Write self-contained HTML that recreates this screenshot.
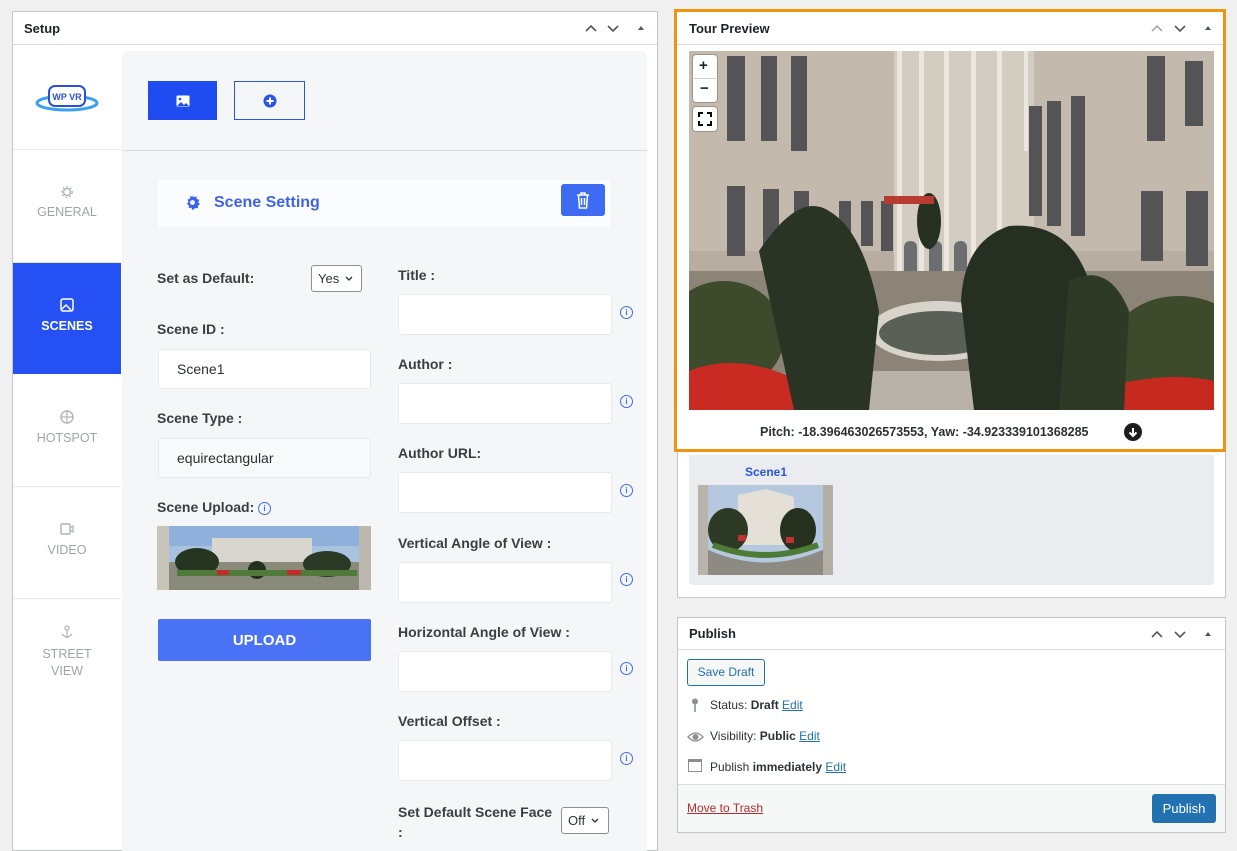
<!DOCTYPE html>
<html><head><meta charset="utf-8">
<style>
*{box-sizing:border-box;margin:0;padding:0}
body{width:1237px;height:844px;overflow:hidden;background:#f0f0f1;font-family:"Liberation Sans",sans-serif;color:#1d2327;position:relative}
.a{position:absolute}
.hdr{font-size:13px;font-weight:bold}
.side{position:absolute;left:13px;width:108px;text-align:center;font-size:12.5px;color:#a0a4a8;border-bottom:1px solid #e6e7e9;background:#fff}
.lbl{position:absolute;font-size:14px;font-weight:bold;color:#3a3d42}
.inp{position:absolute;background:#fff;border:1px solid #e8e9ec;border-radius:3px;font-size:14px;color:#2c2f33;padding-left:18px;display:flex;align-items:center}
.q{position:absolute;width:13px;height:13px;border:1.3px solid #3f6cf0;border-radius:50%;font-size:8px;color:#3f6cf0;text-align:center;line-height:11px;font-weight:bold}
.sel{position:absolute;background:#fff;border:1px solid #8c8f94;border-radius:3px;font-size:13px;color:#2c3338;padding-left:6px;display:flex;align-items:center}
.pl{position:absolute;left:710px;font-size:12px;color:#2c3338}
.pl a{color:#2271b1;text-decoration:underline}
</style></head><body>

<!-- Setup panel -->
<div class="a" style="left:12px;top:11px;width:646px;height:840px;background:#fff;border:1px solid #c3c4c7"></div>
<div class="a" style="left:13px;top:44px;width:644px;height:1px;background:#dcdcde"></div>
<div class="a hdr" style="left:24px;top:21px">Setup</div>
<svg class="a" style="left:584px;top:22px" width="60" height="12"><path d="M2 9l5-5 5 5M24 4l5 5 5-5" fill="none" stroke="#50575e" stroke-width="1.6"/><path d="M54 8l3-4 3 4z" fill="#50575e"/></svg>

<!-- sidebar -->
<div class="side" style="top:45px;height:105px">
 <svg width="66" height="36" viewBox="0 0 66 36" style="margin-top:36px">
  <ellipse cx="33" cy="22" rx="30" ry="7" fill="none" stroke="#3aa0f0" stroke-width="3"/>
  <rect x="15" y="5" width="36" height="20" rx="6" fill="#fff" stroke="#2b4fd8" stroke-width="2"/>
  <text x="33" y="19" font-size="9" font-weight="bold" text-anchor="middle" fill="#2b4fd8" font-family="Liberation Sans">WP VR</text>
 </svg>
</div>
<div class="side" style="top:150px;height:113px;padding-top:36px"><svg width="12" height="12" viewBox="0 0 12 12"><circle cx="6" cy="6" r="3.5" fill="none" stroke="#b0b3b7" stroke-width="1.5"/><circle cx="6" cy="6" r="5.3" fill="none" stroke="#b0b3b7" stroke-width="1.2" stroke-dasharray="2 2"/></svg><div style="margin-top:4px">GENERAL</div></div>
<div class="side" style="top:263px;height:111px;background:#2551f4;color:#fff;font-weight:bold;padding-top:35px;border:none">
 <svg width="14" height="14" viewBox="0 0 14 14"><rect x="1" y="1" width="12" height="12" rx="2" fill="none" stroke="#fff" stroke-width="1.5"/><path d="M2 11l4-4 5 5" fill="none" stroke="#fff" stroke-width="1.5"/></svg>
 <div style="margin-top:4px">SCENES</div></div>
<div class="side" style="top:374px;height:113px;padding-top:36px"><svg width="14" height="14"><circle cx="7" cy="7" r="6" fill="none" stroke="#b0b3b7" stroke-width="1.4"/><path d="M7 1v12M1 7h12" stroke="#b0b3b7" stroke-width="1.2"/></svg><div style="margin-top:4px">HOTSPOT</div></div>
<div class="side" style="top:487px;height:112px;padding-top:36px"><svg width="14" height="12"><rect x="1" y="1" width="9" height="10" rx="1" fill="none" stroke="#b0b3b7" stroke-width="1.4"/><path d="M10 5l3-2v6l-3-2" fill="none" stroke="#b0b3b7" stroke-width="1.2"/></svg><div style="margin-top:5px">VIDEO</div></div>
<div class="side" style="top:599px;height:114px;padding-top:26px;border:none"><svg width="12" height="14"><circle cx="6" cy="3" r="2" fill="none" stroke="#b0b3b7" stroke-width="1.3"/><path d="M6 5v8M1 9q5 6 10 0" fill="none" stroke="#b0b3b7" stroke-width="1.3"/></svg><div style="margin-top:4px;line-height:17px">STREET<br>VIEW</div></div>

<!-- content area -->
<div class="a" style="left:122px;top:51px;width:525px;height:800px;background:#f5f6f8;border-radius:6px 6px 0 0"></div>
<div class="a" style="left:122px;top:150px;width:525px;height:1px;background:#d6dbe6"></div>
<div class="a" style="left:148px;top:81px;width:69px;height:39px;background:#1f4cf0;display:flex;align-items:center;justify-content:center">
 <svg width="14" height="12" viewBox="0 0 14 12"><rect x="0.5" y="0.5" width="13" height="11" rx="1" fill="#fff"/><path d="M1 11l4-4 3 3 2-2 3 3z" fill="#1f4cf0"/><circle cx="4" cy="4" r="1.3" fill="#1f4cf0"/></svg></div>
<div class="a" style="left:234px;top:81px;width:71px;height:39px;border:1px solid #2b55e8;display:flex;align-items:center;justify-content:center">
 <svg width="14" height="14"><circle cx="7" cy="7" r="6.5" fill="#2b55e8"/><path d="M7 3.5v7M3.5 7h7" stroke="#fff" stroke-width="2"/></svg></div>

<div class="a" style="left:158px;top:180px;width:452px;height:47px;background:#fbfcfe"></div>
<svg class="a" style="left:185px;top:195px" width="15" height="15" viewBox="0 0 16 16"><path d="M8 0l1.5 2.3 2.7-.8.4 2.8 2.7.9-1.2 2.5 1.9 2-2.3 1.6.3 2.8-2.8-.2L8 16l-1.3-2.4-2.8.2.3-2.8L1.9 9.4l1.9-2L2.6 4.9l2.7-.9.4-2.8 2.7.8z" fill="#3f63e8"/><circle cx="8" cy="8" r="2.6" fill="#fbfcfe"/></svg>
<div class="a" style="left:214px;top:194px;color:#3f63e8;font-size:16px;font-weight:bold">Scene Setting</div>
<div class="a" style="left:561px;top:184px;width:44px;height:32px;background:#3d6cf2;border-radius:3px;display:flex;align-items:center;justify-content:center">
 <svg width="14" height="17" viewBox="0 0 14 17"><path d="M1 3h12M5 3V1h4v2M2.5 3l1 13h7l1-13M5.5 6v7M8.5 6v7" fill="none" stroke="#fff" stroke-width="1.5"/></svg></div>

<div class="lbl" style="left:157px;top:270px">Set as Default:</div>
<div class="sel" style="left:311px;top:265px;width:51px;height:27px">Yes <svg style="margin-left:6px" width="8" height="6"><path d="M1 1l3 3 3-3" fill="none" stroke="#2c3338" stroke-width="1.3"/></svg></div>
<div class="lbl" style="left:157px;top:321px">Scene ID :</div>
<div class="inp" style="left:158px;top:349px;width:213px;height:40px">Scene1</div>
<div class="lbl" style="left:157px;top:410px">Scene Type :</div>
<div class="inp" style="left:158px;top:438px;width:213px;height:40px;background:#f8f9fa">equirectangular</div>
<div class="lbl" style="left:157px;top:499px">Scene Upload:</div>
<div class="q" style="left:258px;top:502px">i</div>
<svg class="a" style="left:157px;top:526px" width="214" height="64" viewBox="0 0 214 64">
 <rect width="214" height="64" fill="#a9c2e0"/>
 <rect y="0" width="214" height="20" fill="#8fb0db"/>
 <rect x="55" y="12" width="100" height="30" fill="#d9d6cf"/>
 <rect x="0" y="36" width="214" height="28" fill="#8a8a7a"/>
 <ellipse cx="40" cy="36" rx="22" ry="14" fill="#26351f"/>
 <ellipse cx="170" cy="38" rx="24" ry="13" fill="#2a3a24"/>
 <ellipse cx="100" cy="44" rx="9" ry="9" fill="#223020"/>
 <rect x="20" y="44" width="180" height="6" fill="#4f7a3a"/>
 <rect x="0" y="0" width="12" height="64" fill="#c9c4ba"/>
 <rect x="202" y="0" width="12" height="64" fill="#bdb8ad"/>
 <rect x="60" y="44" width="12" height="5" fill="#c42a2a"/><rect x="130" y="44" width="14" height="5" fill="#c42a2a"/>
</svg>
<div class="a" style="left:158px;top:619px;width:213px;height:42px;background:#4a72f5;border-radius:2px;color:#fff;font-size:15px;font-weight:bold;display:flex;align-items:center;justify-content:center">UPLOAD</div>

<div class="lbl" style="left:398px;top:267px">Title :</div>
<div class="inp" style="left:398px;top:294px;width:214px;height:41px"></div><div class="q" style="left:620px;top:306px">i</div>
<div class="lbl" style="left:398px;top:356px">Author :</div>
<div class="inp" style="left:398px;top:383px;width:214px;height:41px"></div><div class="q" style="left:620px;top:395px">i</div>
<div class="lbl" style="left:398px;top:445px">Author URL:</div>
<div class="inp" style="left:398px;top:472px;width:214px;height:41px"></div><div class="q" style="left:620px;top:484px">i</div>
<div class="lbl" style="left:398px;top:535px">Vertical Angle of View :</div>
<div class="inp" style="left:398px;top:562px;width:214px;height:41px"></div><div class="q" style="left:620px;top:573px">i</div>
<div class="lbl" style="left:398px;top:624px">Horizontal Angle of View :</div>
<div class="inp" style="left:398px;top:651px;width:214px;height:41px"></div><div class="q" style="left:620px;top:662px">i</div>
<div class="lbl" style="left:398px;top:713px">Vertical Offset :</div>
<div class="inp" style="left:398px;top:740px;width:214px;height:41px"></div><div class="q" style="left:620px;top:752px">i</div>
<div class="lbl" style="left:398px;top:802px;line-height:20px">Set Default Scene Face<br>:</div>
<div class="sel" style="left:561px;top:807px;width:48px;height:27px">Off <svg style="margin-left:6px" width="8" height="6"><path d="M1 1l3 3 3-3" fill="none" stroke="#2c3338" stroke-width="1.3"/></svg></div>

<!-- Tour preview outer -->
<div class="a" style="left:677px;top:12px;width:549px;height:586px;background:#fff;border:1px solid #c3c4c7"></div>
<div class="a" style="left:689px;top:455px;width:525px;height:130px;background:#eaecef;border-radius:0 0 4px 4px"></div>
<div class="a" style="left:745px;top:465px;font-size:12px;font-weight:bold;color:#2b55e8">Scene1</div>
<svg class="a" style="left:698px;top:485px" width="135" height="90" viewBox="0 0 135 90">
 <rect width="135" height="90" rx="4" fill="#b6c8e0"/>
 <path d="M40 10L68 4L96 12V60H40Z" fill="#e4e0d8"/>
 <ellipse cx="30" cy="45" rx="20" ry="22" fill="#2c3a26"/>
 <ellipse cx="100" cy="45" rx="18" ry="22" fill="#26321f"/>
 <path d="M0 60Q67 95 135 60V90H0Z" fill="#8c8a82"/>
 <path d="M15 60Q67 80 120 60" fill="none" stroke="#4d7a34" stroke-width="6"/>
 <rect x="40" y="50" width="8" height="6" fill="#c23030"/><rect x="88" y="52" width="8" height="6" fill="#c23030"/>
 <rect x="0" width="10" height="90" fill="#b9b4aa"/><rect x="125" width="10" height="90" fill="#b4afa5"/>
</svg>

<!-- orange highlight -->
<div class="a" style="left:674px;top:9px;width:552px;height:443px;background:#fff;border:3px solid #f0930f"></div>
<div class="a" style="left:677px;top:44px;width:546px;height:1px;background:#dcdcde"></div>
<div class="a hdr" style="left:689px;top:21px">Tour Preview</div>
<svg class="a" style="left:1151px;top:22px" width="60" height="12"><path d="M1 9l5-5 5 5" fill="none" stroke="#a7aaad" stroke-width="1.6"/><path d="M24 4l5 5 5-5" fill="none" stroke="#50575e" stroke-width="1.6"/><path d="M54 8l3-4 3 4z" fill="#50575e"/></svg>

<svg class="a" style="left:689px;top:51px" width="525" height="359" viewBox="0 0 525 359">
 <rect width="525" height="359" fill="#b7ada0"/>
 <rect x="0" y="0" width="525" height="200" fill="#c3b9ac"/>
 <rect x="205" y="0" width="140" height="250" fill="#d3ccc1"/>
 <g fill="#545456">
  <rect x="38" y="5" width="18" height="85"/><rect x="72" y="5" width="16" height="85"/><rect x="102" y="5" width="16" height="95"/>
  <rect x="38" y="135" width="18" height="70"/><rect x="74" y="138" width="16" height="70"/><rect x="105" y="140" width="15" height="60"/>
  <rect x="150" y="150" width="12" height="40"/><rect x="172" y="150" width="12" height="45"/><rect x="192" y="150" width="12" height="50"/>
  <rect x="340" y="55" width="13" height="110"/><rect x="358" y="50" width="14" height="125"/><rect x="382" y="45" width="14" height="140"/>
  <rect x="458" y="5" width="18" height="85"/><rect x="496" y="10" width="18" height="65"/>
  <rect x="452" y="140" width="22" height="70"/><rect x="497" y="140" width="22" height="75"/>
 </g>
 <g fill="#6c6d70"><rect x="215" y="190" width="13" height="50" rx="6"/><rect x="240" y="190" width="13" height="50" rx="6"/><rect x="265" y="190" width="13" height="50" rx="6"/><rect x="292" y="190" width="13" height="50" rx="6"/><rect x="318" y="190" width="13" height="50" rx="6"/></g>
 <g fill="#ebe7df"><rect x="208" y="0" width="5" height="250"/><rect x="230" y="0" width="5" height="250"/><rect x="255" y="0" width="5" height="250"/><rect x="282" y="0" width="5" height="250"/><rect x="308" y="0" width="5" height="250"/><rect x="335" y="0" width="4" height="100"/></g>
 <rect x="0" y="220" width="525" height="139" fill="#8c8476"/>
 <ellipse cx="35" cy="285" rx="60" ry="55" fill="#3d4a2c"/>
 <ellipse cx="490" cy="300" rx="70" ry="55" fill="#3e4a2c"/>
 <ellipse cx="250" cy="280" rx="70" ry="30" fill="#d8d4cc"/>
 <ellipse cx="250" cy="282" rx="60" ry="22" fill="#5a5f58"/>
 <rect x="175" y="320" width="150" height="39" fill="#b8b2a8"/>
 <path d="M0 320Q50 300 110 330V359H0Z" fill="#c92a22"/>
 <path d="M420 335Q480 320 525 330V359H420Z" fill="#c7291f"/>
 <path d="M105 359L70 200Q110 140 140 160Q175 180 190 260L180 359Z" fill="#2a3424"/>
 <path d="M285 359L272 250Q275 190 320 175Q380 170 400 230L410 359Z" fill="#253022"/>
 <path d="M370 359L380 230Q420 210 440 260L435 359Z" fill="#2f3a26"/>
 <ellipse cx="240" cy="170" rx="12" ry="28" fill="#263022"/>
 <rect x="195" y="145" width="50" height="8" fill="#b83a30"/>
</svg>
<div class="a" style="left:693px;top:55px;width:24px;height:47px;background:#fff;border-radius:3px;box-shadow:0 0 0 1px rgba(0,0,0,.2)"></div>
<div class="a" style="left:699px;top:57px;font-size:15px;font-weight:bold">+</div>
<div class="a" style="left:694px;top:78px;width:22px;height:1px;background:#ccc"></div>
<div class="a" style="left:700px;top:80px;font-size:15px;font-weight:bold">&minus;</div>
<div class="a" style="left:693px;top:107px;width:24px;height:24px;background:#fff;border-radius:3px;box-shadow:0 0 0 1px rgba(0,0,0,.2)"></div>
<svg class="a" style="left:698px;top:112px" width="14" height="14"><path d="M1 5V1h4M9 1h4v4M13 9v4H9M5 13H1V9" fill="none" stroke="#000" stroke-width="2"/></svg>
<div class="a" style="left:760px;top:425px;font-size:12.5px;font-weight:bold;color:#2c2f33">Pitch: -18.396463026573553, Yaw: -34.923339101368285</div>
<div class="a" style="left:1124px;top:423px;width:18px;height:18px;border-radius:50%;background:#1d1d1f"></div>
<svg class="a" style="left:1127px;top:426px" width="12" height="12"><path d="M6 2v8M2.5 6.5L6 10l3.5-3.5" fill="none" stroke="#fff" stroke-width="2"/></svg>

<!-- Publish -->
<div class="a" style="left:677px;top:617px;width:549px;height:216px;background:#fff;border:1px solid #c3c4c7"></div>
<div class="a" style="left:678px;top:649px;width:547px;height:1px;background:#dcdcde"></div>
<div class="a hdr" style="left:689px;top:626px">Publish</div>
<svg class="a" style="left:1151px;top:628px" width="60" height="12"><path d="M1 9l5-5 5 5M24 4l5 5 5-5" fill="none" stroke="#50575e" stroke-width="1.6"/><path d="M54 8l3-4 3 4z" fill="#50575e"/></svg>
<div class="a" style="left:687px;top:659px;width:78px;height:27px;border:1px solid #2271b1;border-radius:3px;background:#f6f7f7;color:#2271b1;font-size:12px;text-align:center;line-height:25px">Save Draft</div>
<svg class="a" style="left:691px;top:698px" width="8" height="15"><circle cx="4" cy="3.5" r="3" fill="#8c8f94"/><path d="M4 6v8" stroke="#8c8f94" stroke-width="1.6"/></svg>
<div class="pl" style="top:698px">Status: <b>Draft</b> <a>Edit</a></div>
<svg class="a" style="left:687px;top:731px" width="17" height="12"><path d="M1 6q7.5-8 15 0q-7.5 8-15 0z" fill="none" stroke="#8c8f94" stroke-width="1.3"/><circle cx="8.5" cy="6" r="3" fill="#8c8f94"/></svg>
<div class="pl" style="top:729px">Visibility: <b>Public</b> <a>Edit</a></div>
<div class="a" style="left:688px;top:759px;width:14px;height:13px;border:1.5px solid #8c8f94;border-top-width:3px"></div>
<div class="pl" style="top:760px">Publish <b>immediately</b> <a>Edit</a></div>
<div class="a" style="left:678px;top:784px;width:547px;height:48px;background:#f6f7f7;border-top:1px solid #dcdcde"></div>
<div class="a" style="left:687px;top:801px;font-size:12px;color:#b32d2e;text-decoration:underline">Move to Trash</div>
<div class="a" style="left:1152px;top:794px;width:64px;height:29px;background:#2271b1;border-radius:3px;color:#fff;font-size:13px;text-align:center;line-height:29px">Publish</div>
</body></html>
